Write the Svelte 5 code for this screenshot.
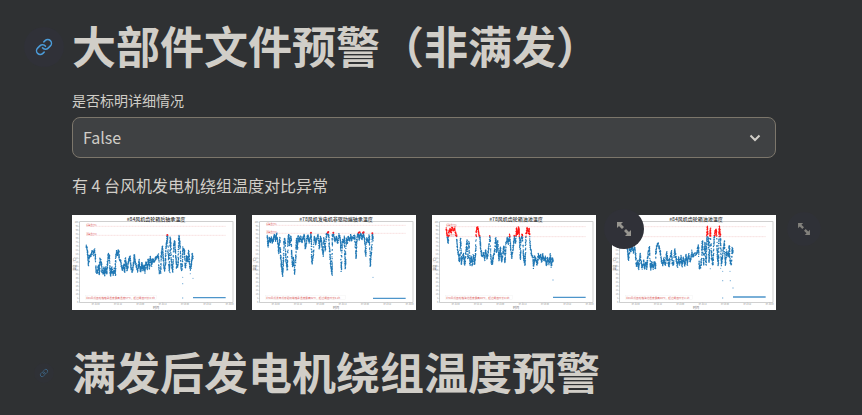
<script>
  let detail = $state('False');

  const noiseA =
    '43,92 46,106 49,150 53,120 57,122 60,107 64,118 67,103 70,122 72,169 76,172 79,152 82,176 84,132 88,140 90,170 94,176 96,158 98,178 101,155 104,176 107,142 109,118 112,122 114,168 116,182 119,160 123,178 127,164 130,178 131,130 134,108 136,120 140,105 142,134 145,132 149,160 152,165 155,148 158,170 160,130 163,152 166,166 169,140 172,132 174,124 177,158 181,172 184,150 187,120 190,140 194,158 197,168 201,136 204,160 206,170 210,142 213,166 216,150 219,172 222,140 226,160 229,132 232,158 235,128 239,150 242,134 246,140 250,130 255,126 259,120 262,174 266,172 268,118 271,95 274,130 277,166 280,150 282,100';

  const charts = [
    {
      title: '#84风机齿轮箱后轴承温度',
      cut: 0,
      top: 34,
      limit: 61,
      noteWidth: 212,
      note: '#84风机齿轮箱轴承温度最高温度67℃，超过阈值时长0.5h',
      line:
        noiseA +
        ' 286,62 289,120 292,168 295,66 299,155 302,168 306,86 308,78 311,120 314,158 318,150 321,62 324,90 327,160 330,164 333,100 337,106 340,158 344,124 348,140 350,108 353,150 356,164 359,142 361,116 363,130',
      flat: 248,
      hot: [[286, 60]],
      loose: [[295, 173], [326, 159], [331, 162], [332, 187], [355, 176], [332, 206], [363, 190], [332, 249]]
    },
    {
      title: '#78风机发电机非驱动端轴承温度',
      cut: 0,
      top: 31,
      limit: 55,
      noteWidth: 240,
      note: '#78风机发电机非驱动端轴承温度最高92℃，超过阈值时长0.2h',
      line:
        '46,62 48,94 52,68 55,80 58,66 61,82 64,72 67,60 71,76 74,58 77,80 80,112 83,70 86,120 88,150 92,182 94,138 96,78 99,72 102,140 106,162 108,70 111,58 113,90 117,64 119,120 122,154 125,130 128,176 131,130 133,72 136,100 138,64 142,78 146,66 150,82 153,70 157,60 160,100 164,74 168,62 171,80 175,66 177,56 180,145 184,118 187,64 191,86 194,72 198,62 202,98 206,66 209,82 213,120 216,70 220,106 223,60 226,54 230,64 233,108 236,150 240,177 241,62 245,58 249,78 253,66 257,84 261,58 265,74 268,165 271,74 275,82 277,66 280,160 283,70 286,82 289,64 293,78 296,60 299,76 303,68 308,62 312,130 315,64 319,54 322,72 326,56 330,72 334,56 337,66 341,120 344,70 349,82 352,60 355,152 358,112 361,56 363,76',
      flat: 250,
      hot: [[177, 53], [227, 53], [229, 51], [244, 53], [320, 53], [323, 52], [333, 53], [335, 52], [361, 55]],
      loose: [[363, 187]]
    },
    {
      title: '#78风机齿轮箱油池温度',
      cut: 65,
      top: 35,
      limit: 65,
      noteWidth: 200,
      note: '#78风机齿轮箱油池温度最高80℃，超过阈值时长8.0h',
      line:
        '43,40 45,60 48,85 51,48 54,42 57,50 60,38 64,48 68,40 71,56 74,65 76,105 79,116 82,140 86,74 88,148 92,126 94,118 98,150 101,120 105,78 108,130 111,84 114,148 118,126 121,150 124,122 128,146 131,108 133,44 137,38 140,54 143,64 147,108 150,124 154,116 158,132 161,106 165,130 169,110 174,64 177,138 181,148 184,120 187,116 191,70 194,110 197,78 201,134 205,96 209,140 213,112 216,96 219,142 222,82 226,70 229,86 233,60 236,100 239,128 243,100 247,62 250,84 254,40 257,58 260,38 262,58 265,132 267,70 271,58 275,126 279,150 282,56 286,40 289,52 292,44 295,95 298,114 303,130 305,156 308,126 312,136 316,150 319,118 322,128 326,120 329,140 332,118 336,136 340,126 343,152 347,130 351,146 355,120 358,154 361,130 363,138',
      flat: 247,
      hot: [],
      loose: [[363, 195]]
    },
    {
      title: '#84风机齿轮箱油池温度',
      cut: 65,
      top: 35,
      limit: 65,
      noteWidth: 200,
      note: '#84风机齿轮箱油池温度最高80℃，超过阈值时长2.1h',
      line:
        '43,92 46,98 49,136 53,104 57,106 60,94 64,112 67,98 70,108 73,152 77,140 80,160 84,118 87,138 91,160 95,136 98,162 102,142 104,160 108,118 112,98 116,162 119,142 123,160 127,142 130,160 132,108 135,90 138,88 142,100 145,114 149,140 153,148 156,130 160,152 164,112 168,140 171,152 175,124 178,110 181,142 184,150 188,104 192,128 196,156 200,126 203,150 207,124 210,152 214,128 218,150 222,120 226,148 230,118 235,142 239,110 243,124 248,116 254,118 259,92 262,158 267,154 271,76 275,148 279,84 282,148 286,34 289,80 291,142 295,40 299,130 303,150 306,72 309,52 313,44 316,120 319,148 322,34 325,62 328,150 332,118 337,80 340,150 344,108 349,124 352,92 355,146 358,148 361,98 363,115',
      flat: 246,
      hot: [],
      loose: [[295, 161], [326, 160], [332, 169], [354, 169], [332, 197], [355, 197], [363, 219], [332, 249]]
    }
  ];

  // Expands a coarse series into the individual samples of the scatter plot:
  // gentle slopes are sampled densely, steep ones thin out.
  function samples(line) {
    const points = line.split(' ').map((p) => p.split(',').map(Number));
    let seed = 7;
    const rand = () => (seed = (seed * 16807) % 2147483647) / 2147483647;
    const below = [];
    for (let i = 1; i < points.length; i++) {
      const [ax, ay] = points[i - 1];
      const [bx, by] = points[i];
      const length = Math.hypot(bx - ax, by - ay);
      const n = Math.ceil(length / 2) + 4;
      for (let k = 0; k < n; k++) {
        const t = k / n;
        const middle = t > 0.25 && t < 0.75;
        if (length > 45 && middle && rand() < 0.55) continue;
        const x = ax + (bx - ax) * t + (rand() - 0.5) * 2;
        const y = ay + (by - ay) * t + (rand() - 0.5) * 9;
        below.push([x.toFixed(1), Math.max(y, 34).toFixed(1)]);
      }
    }
    return below;
  }

  const dots = (list) => list.map(([x, y]) => `M${x} ${y}h.1`).join('');
  const plots = charts.map((c) => {
    const all = samples(c.line);
    const floor = c.cut || c.limit;
    return {
      ...c,
      cool: dots(all.filter(([, y]) => +y >= floor - 1)),
      warm: c.cut ? dots(all.filter(([, y]) => +y < floor - 1)) : ''
    };
  });

  const yTicks = Array.from({ length: 21 }, (_, i) => ({ y: 22 + i * 12, v: 100 - i * 5 }));
  const xTicks = ['07-11 00', '07-11 12', '07-12 00', '07-12 12', '07-13 00', '07-13 12', '07-14 00'];
</script>

{#snippet linkIcon()}
  <svg viewBox="0 0 24 24" fill="none" stroke="currentColor" stroke-width="2" stroke-linecap="round" stroke-linejoin="round" aria-hidden="true">
    <path d="M10 13a5 5 0 0 0 7.54.54l3-3a5 5 0 0 0-7.07-7.07l-1.72 1.71" />
    <path d="M14 11a5 5 0 0 0-7.54-.54l-3 3a5 5 0 0 0 7.07 7.07l1.71-1.71" />
  </svg>
{/snippet}

<main>
  <header class="heading">
    <a class="anchor" href="#part-warning" aria-label="链接">{@render linkIcon()}</a>
    <h1 id="part-warning">大部件文件预警（非满发）</h1>
  </header>

  <div class="field">
    <label for="detail">是否标明详细情况</label>
    <div class="control">
      <select id="detail" bind:value={detail}>
        <option>False</option>
        <option>True</option>
      </select>
      <svg class="chevron" viewBox="0 0 12 8" aria-hidden="true">
        <path d="M1.500 1.500 6 6l4.500-4.500" fill="none" stroke="currentColor" stroke-width="2" />
      </svg>
    </div>
  </div>

  <p>有 4 台风机发电机绕组温度对比异常</p>

  <div class="charts">
    {#each plots as c, i}
      <figure>
        <svg class="plot" viewBox="0 0 492 285" role="img" aria-label={c.title}>
          <rect width="492" height="285" fill="#fff" />
          <rect x="23" y="20" width="460" height="242" fill="none" stroke="#b8b8b8" stroke-width="2" />
          <text class="title" x="252" y="17">{c.title}</text>
          {#each yTicks as t}
            <path d="M19 {t.y}h4" stroke="#aaa" />
            <text class="tick" x="18" y={t.y + 2} text-anchor="end">{t.v}</text>
          {/each}
          {#each xTicks as t, k}
            <path d="M{71 + k * 67} 262v3" stroke="#aaa" />
            <text class="tick" x={71 + k * 67} y="271" text-anchor="middle">{t}</text>
          {/each}
          <text class="axis" x="252" y="281">时间</text>
          <text class="axis" transform="translate(11 145) rotate(-90)">温度（℃）</text>
          <path class="limit" d="M43 {c.top}H461M43 {c.limit}H461" />
          <text class="mark" x="43" y={c.top - 1}>报警温度95</text>
          <text class="mark" x="43" y={c.limit - 1}>预警温度80</text>
          <path class="trace" d={c.cool} />
          <path class="trace over" d={c.warm} />
          <path d="M363 {c.flat}H461" stroke="#4d95ca" stroke-width="4" />
          {#each c.loose as [x, y]}
            <circle cx={x} cy={y} r="2" fill="#7fb2da" />
          {/each}
          {#each c.hot as [x, y]}
            <circle cx={x} cy={y} r="3" fill="#f0222c" />
          {/each}
          <rect x="41" y="241" width={c.noteWidth} height="13" fill="#fff" stroke="#eee" />
          <text class="note" x="43" y="251">{c.note}</text>
        </svg>
        {#if i > 1}
          <button class="expand" class:fading={i === 3} aria-label="全屏查看">
            <svg viewBox="0 0 14 14" fill="currentColor" aria-hidden="true">
              <path d="M0 0h6L4 2l3 3-2 2-3-3-2 2zM14 14H8l2-2-3-3 2-2 3 3 2-2z" />
            </svg>
          </button>
        {/if}
      </figure>
    {/each}
  </div>

  <header class="heading next">
    <a class="anchor small" href="#winding-warning" aria-label="链接">{@render linkIcon()}</a>
    <h1 id="winding-warning">满发后发电机绕组温度预警</h1>
  </header>
</main>

<style>
  :global(body) {
    margin: 0;
    background: #2f3133;
  }
  main {
    box-sizing: border-box;
    min-height: 100vh;
    padding: 18px 86px 15px 72px;
    overflow: hidden;
    color: #d1cec8;
    font-family: 'Noto Sans CJK SC', sans-serif;
  }
  .heading {
    position: relative;
  }
  h1 {
    margin: 0;
    font-size: 44px;
    line-height: 54px;
    font-weight: 700;
  }
  .anchor {
    position: absolute;
    left: -48px;
    top: 9px;
    width: 40px;
    height: 40px;
    display: flex;
    align-items: center;
    justify-content: center;
    border-radius: 50%;
    background: #303138;
    color: #4b9bd8;
  }
  .anchor svg {
    width: 18px;
    height: 18px;
  }
  .anchor.small {
    transform: scale(0.5);
    opacity: 0.6;
  }
  .field {
    margin-top: 17px;
  }
  label {
    display: block;
    font-size: 14px;
    line-height: 22px;
    margin-bottom: 6px;
  }
  .control {
    position: relative;
  }
  select {
    display: block;
    box-sizing: border-box;
    width: 100%;
    height: 41px;
    padding: 0 40px 2px 10px;
    appearance: none;
    border: 1px solid #7c766b;
    border-radius: 8px;
    background: #3f4143;
    color: inherit;
    font: inherit;
    font-size: 16px;
  }
  .chevron {
    position: absolute;
    right: 15px;
    top: 17px;
    width: 12px;
    height: 8px;
    pointer-events: none;
  }
  p {
    margin: 15px 0 17px;
    font-size: 16px;
    line-height: 25px;
  }
  .charts {
    display: grid;
    grid-template-columns: repeat(4, minmax(0, 1fr));
    gap: 16px;
  }
  figure {
    position: relative;
    margin: 0;
  }
  .plot {
    display: block;
    width: 100%;
  }
  .title {
    font-size: 15px;
    font-weight: 500;
    text-anchor: middle;
    fill: #333;
  }
  .tick {
    font-size: 6px;
    fill: #888;
  }
  .axis {
    font-size: 9px;
    text-anchor: middle;
    fill: #666;
  }
  .limit {
    fill: none;
    stroke: #eba5a5;
    stroke-width: 1;
    stroke-dasharray: 7 2;
  }
  .mark {
    font-size: 6px;
    fill: #e06a6a;
  }
  .note {
    font-size: 8px;
    fill: #dc6464;
  }
  .trace {
    fill: none;
    stroke: #1f77b4;
    stroke-width: 4;
    stroke-linecap: round;
  }
  .trace.over {
    stroke: #ff1616;
  }
  .expand {
    position: absolute;
    z-index: 1;
    left: calc(100% + 8px);
    top: -6px;
    width: 40px;
    height: 40px;
    padding: 0;
    display: flex;
    align-items: center;
    justify-content: center;
    border: 0;
    border-radius: 50%;
    background: #303138;
    color: #97958f;
  }
  .expand svg {
    width: 14px;
    height: 14px;
  }
  .expand.fading {
    transform: scale(0.85);
    opacity: 0.8;
  }
  .next {
    margin-top: 34px;
  }
</style>
